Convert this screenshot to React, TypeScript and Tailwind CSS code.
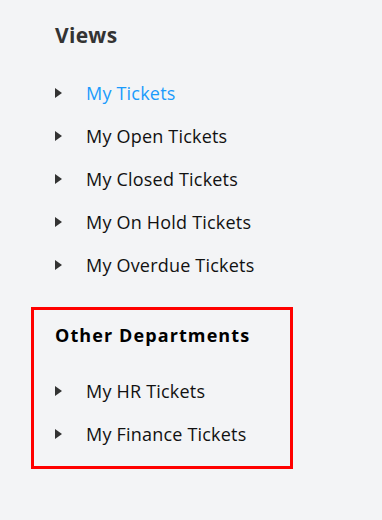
const views = ['My Tickets', 'My Open Tickets', 'My Closed Tickets', 'My On Hold Tickets', 'My Overdue Tickets']
const departments = ['My HR Tickets', 'My Finance Tickets']

function Caret() {
  return (
    <svg width="7" height="10" viewBox="0 0 7 10" className="shrink-0">
      <path d="M0 0 L7 5 L0 10 Z" fill="#333333" />
    </svg>
  )
}

function NavItem({ label, active }: { label: string; active?: boolean }) {
  return (
    <li className="flex h-[43px] items-center">
      <Caret />
      <span
        className={`ml-[24px] text-[18px] leading-[24px] tracking-[0.2px] ${
          active ? 'text-[#1a9bfc]' : 'text-[#111111]'
        }`}
      >
        {label}
      </span>
    </li>
  )
}

export default function App() {
  return (
    <div
      className="min-h-screen w-[382px] h-[520px] bg-[#f3f4f6] pt-[21px]"
      style={{ fontFamily: '"Open Sans", "Liberation Sans", sans-serif' }}
    >
      <div className="pl-[55px]">
        <h2 className="text-[21px] font-bold leading-[28px] tracking-[0.3px] text-[#333333]">Views</h2>
        <ul className="mt-[22px]">
          {views.map((v, i) => (
            <NavItem key={v} label={v} active={i === 0} />
          ))}
        </ul>
      </div>

      <div className="ml-[31px] mt-[21px] w-[262px] h-[162px] border-[3px] border-[#ff0000] pl-[21px] pt-[11px]">
        <h2 className="text-[18px] font-bold leading-[28px] tracking-[1.1px] text-black">Other Departments</h2>
        <ul className="mt-[20px]">
          {departments.map((d) => (
            <NavItem key={d} label={d} />
          ))}
        </ul>
      </div>
    </div>
  )
}
